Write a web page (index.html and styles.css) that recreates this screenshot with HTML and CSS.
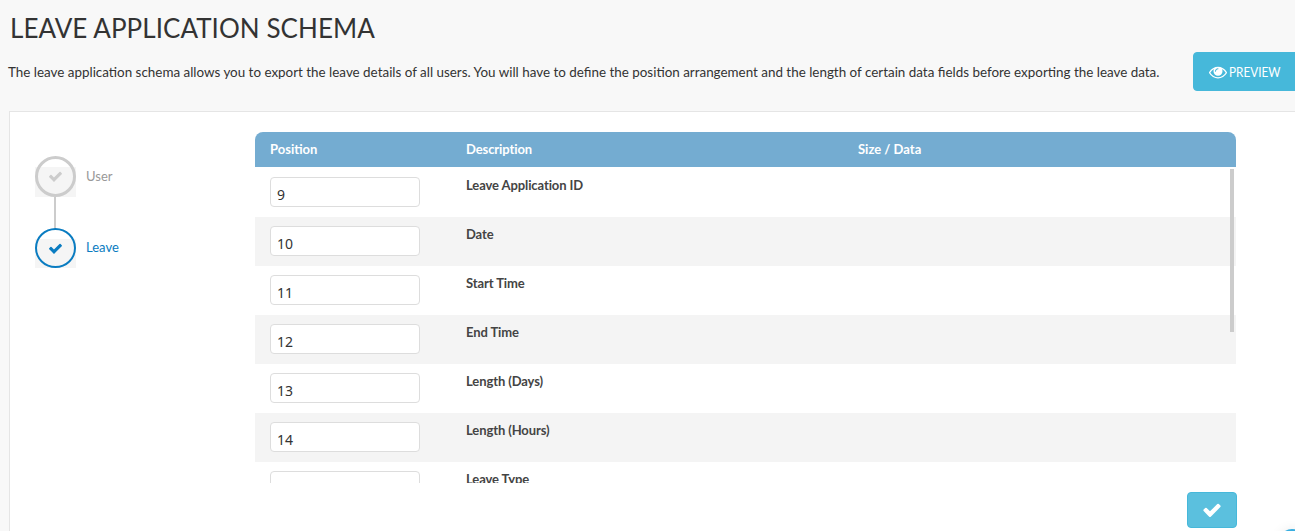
FILE: index.html
```html
<!DOCTYPE html>
<html lang="en">
<head>
  <meta charset="UTF-8">
  <title>Leave Application Schema</title>
  <link rel="stylesheet" href="styles.css">
</head>
<body>
  <div class="page-head">
    <h1>LEAVE APPLICATION SCHEMA</h1>
    <div class="intro">
      <p>The leave application schema allows you to export the leave details of all users. You will have to define the position arrangement and the length of certain data fields before exporting the leave data.</p>
      <button class="btn btn-preview">
        <svg viewBox="0 0 1792 1792" width="18" height="18"><path fill="#fff" d="M1664 960q-152-236-381-353 61 104 61 225 0 185-131.500 316.500t-316.500 131.500-316.500-131.500-131.500-316.500q0-121 61-225-229 117-381 353 133 205 333.500 326.500t434.500 121.500 434.500-121.500 333.500-326.500zm-720-384q0-20-14-34t-34-14q-125 0-214.500 89.500t-89.500 214.500q0 20 14 34t34 14 34-14 14-34q0-86 61-147t147-61q20 0 34-14t14-34zm848 384q0 34-20 69-140 230-376.500 368.500t-499.500 138.500-499.500-139-376.500-368q-20-35-20-69t20-69q140-229 376.500-368t499.500-139 499.500 139 376.500 368q20 35 20 69z"/></svg>
        <span class="btn-label">PREVIEW</span>
      </button>
    </div>
  </div>

  <div class="panel">
    <ul class="steps">
      <li class="step done">
        <span class="step-icon"><span class="step-ring"><svg viewBox="0 0 1792 1792" width="15" height="15"><path fill="currentColor" d="M1671 566q0 40-28 68l-724 724-136 136q-28 28-68 28t-68-28l-136-136-362-362q-28-28-28-68t28-68l136-136q28-28 68-28t68 28l294 295 656-657q28-28 68-28t68 28l136 136q28 28 28 68z"/></svg></span></span>
        <span class="step-name">User</span>
      </li>
      <li class="step active">
        <span class="step-icon"><span class="step-ring"><svg viewBox="0 0 1792 1792" width="15" height="15"><path fill="currentColor" d="M1671 566q0 40-28 68l-724 724-136 136q-28 28-68 28t-68-28l-136-136-362-362q-28-28-28-68t28-68l136-136q28-28 68-28t68 28l294 295 656-657q28-28 68-28t68 28l136 136q28 28 28 68z"/></svg></span></span>
        <span class="step-name">Leave</span>
      </li>
    </ul>

    <div class="schema">
      <div class="schema-head">
        <span class="col-pos">Position</span>
        <span class="col-desc">Description</span>
        <span>Size / Data</span>
      </div>
      <div class="schema-body">
        <div class="row"><div class="col-pos"><input type="text" value="9"></div><div class="col-desc">Leave Application ID</div></div>
        <div class="row"><div class="col-pos"><input type="text" value="10"></div><div class="col-desc">Date</div></div>
        <div class="row"><div class="col-pos"><input type="text" value="11"></div><div class="col-desc">Start Time</div></div>
        <div class="row"><div class="col-pos"><input type="text" value="12"></div><div class="col-desc">End Time</div></div>
        <div class="row"><div class="col-pos"><input type="text" value="13"></div><div class="col-desc">Length (Days)</div></div>
        <div class="row"><div class="col-pos"><input type="text" value="14"></div><div class="col-desc">Length (Hours)</div></div>
        <div class="row"><div class="col-pos"><input type="text" value="15"></div><div class="col-desc">Leave Type</div></div>
        <div class="scrollbar"></div>
      </div>
      <div class="schema-foot">
        <button class="btn btn-save"><svg viewBox="0 0 1792 1792" width="20" height="20"><path fill="#fff" d="M1671 566q0 40-28 68l-724 724-136 136q-28 28-68 28t-68-28l-136-136-362-362q-28-28-28-68t28-68l136-136q28-28 68-28t68 28l294 295 656-657q28-28 68-28t68 28l136 136q28 28 28 68z"/></svg></button>
      </div>
    </div>
  </div>
  <div class="chat-bubble"></div>
</body>
</html>
```

FILE: styles.css
```css
html, body {
  margin: 0;
  height: 531px;
  overflow: hidden;
}
body {
  position: relative;
  background: #f8f8f8;
  color: #333;
  font-family: "Lato", "Noto Sans", sans-serif;
  font-size: 13px;
}
h1 {
  margin: 0;
  padding: 13px 0 0 10px;
  font-size: 26px;
  font-weight: 400;
  line-height: 30px;
  letter-spacing: 0.05px;
}
.intro {
  display: flex;
  align-items: flex-start;
  justify-content: space-between;
  padding: 9px 0 0 8px;
}
.intro p {
  margin: 11px 0 0;
  font-size: 13.42px;
  line-height: 18px;
  white-space: nowrap;
}
.btn {
  border: 1px solid #46b8da;
  border-radius: 4px;
  color: #fff;
  font-family: inherit;
}
.btn-preview {
  display: flex;
  align-items: center;
  gap: 2px;
  flex: none;
  width: 118px;
  height: 39px;
  margin-right: -16px;
  padding: 0 0 0 15px;
  background: #46b8da;
  font-size: 14px;
}
.btn-label {
  display: inline-block;
  transform: scaleX(0.84);
  transform-origin: left center;
  margin-top: -1px;
}
.panel {
  display: flex;
  height: 420px;
  margin: 20px -20px 0 9px;
  background: #fff;
  border: 1px solid #e5e5e5;
  border-width: 1px 0 0 1px;
}
.steps {
  width: 245px;
  flex: none;
  margin: 0;
  padding: 44px 0 0 25px;
  list-style: none;
  box-sizing: border-box;
}
.step {
  display: flex;
  align-items: flex-start;
  gap: 10px;
  height: 72px;
}
.step.active {
  height: 40px;
}
.step-icon {
  flex: none;
  width: 41px;
  height: 41px;
  background: linear-gradient(transparent 11px, #f5f5f5 11px);
}
.step-ring {
  display: flex;
  align-items: center;
  justify-content: center;
  position: relative;
  box-sizing: border-box;
  height: 41px;
  border: 3px solid #ccc;
  border-radius: 50%;
  color: #ccc;
}
.step-name {
  margin-top: 12px;
}
.step.done .step-name {
  color: #999;
}
.step.done .step-ring::after {
  content: "";
  position: absolute;
  top: 38px;
  left: 16px;
  width: 2px;
  height: 32px;
  background: #ccc;
}
.step.active .step-name {
  margin-top: 11px;
  color: #0a7cc1;
}
.step.active .step-icon,
.step.active .step-ring {
  height: 40px;
}
.step.active .step-ring {
  border-width: 2px;
  border-color: #0a7cc1;
  color: #0a7cc1;
}
.schema {
  width: 981px;
  flex: none;
  padding-top: 20px;
}
.schema-head {
  display: flex;
  height: 35px;
  padding-bottom: 2px;
  align-items: center;
  box-sizing: border-box;
  background: #74acd1;
  border-radius: 8px 8px 0 0;
  color: #fff;
  font-weight: 700;
}
.col-pos {
  width: 211px;
  padding-left: 15px;
  box-sizing: border-box;
}
.col-desc {
  width: 392px;
  letter-spacing: -0.1px;
}
.schema-body {
  position: relative;
  height: 316px;
  overflow: hidden;
}
.row {
  display: flex;
  height: 49px;
  padding-top: 9px;
  box-sizing: border-box;
  font-weight: 700;
  color: #444;
}
.row:first-child {
  height: 50px;
  padding-top: 10px;
}
.row:nth-child(even) {
  background: #f4f4f4;
}
.row input {
  box-sizing: border-box;
  width: 150px;
  height: 30px;
  padding: 4px 6px 0;
  background: #fff;
  border: 1px solid #ddd;
  border-radius: 4px;
  color: #333;
  font-family: "Noto Sans", sans-serif;
  font-size: 14px;
}
.scrollbar {
  position: absolute;
  top: 2px;
  right: 2px;
  width: 4px;
  height: 163px;
  background: #ccc;
}
.schema-foot {
  display: flex;
  justify-content: flex-end;
  margin-right: -1px;
  padding-top: 9px;
}
.btn-save {
  display: flex;
  align-items: center;
  justify-content: center;
  width: 50px;
  height: 36px;
  padding: 0;
  background: #5bc0de;
}
.chat-bubble {
  position: absolute;
  left: 1279px;
  top: 529px;
  width: 26px;
  height: 26px;
  background: #38aee0;
  border-radius: 50%;
  box-shadow: 0 0 12px rgba(0, 0, 0, 0.08);
}
```
